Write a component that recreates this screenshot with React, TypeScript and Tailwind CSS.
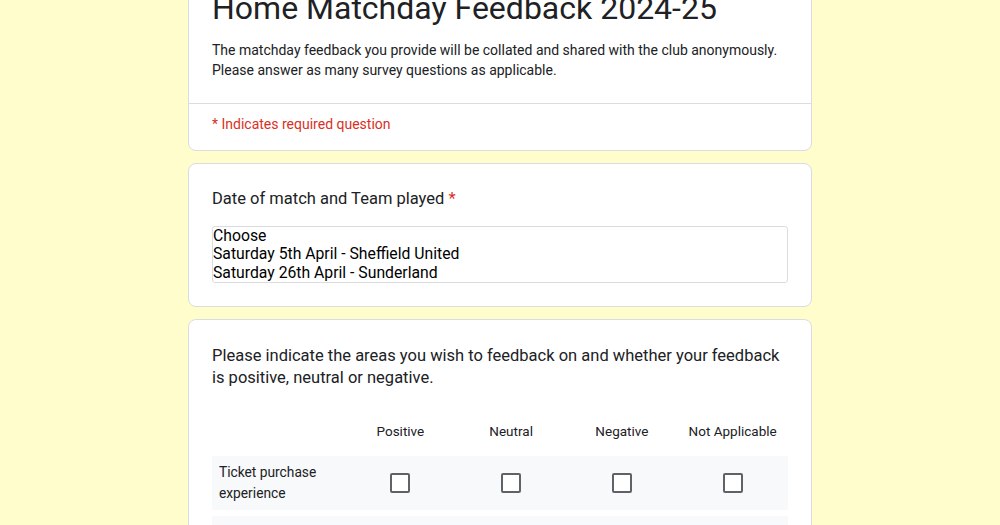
import React from 'react'

const cols = ['Positive', 'Neutral', 'Negative', 'Not Applicable']
const rows = ['Ticket purchase experience', 'Travel to the stadium']

function Box() {
  return <div className="h-5 w-5 rounded-[2px] border-2 border-[#5f6368] bg-white" />
}

export default function App() {
  return (
    <div className="min-h-[525px] w-full overflow-hidden bg-[#fffdcc] font-['Roboto',sans-serif] text-[#202124]">
      <div className="mx-auto flex w-[624px] flex-col gap-3 -mt-[37px]">
        {/* header card */}
        <div className="rounded-lg border border-[#dadce0] bg-white">
          <div className="px-[23px] pt-6 pb-[23px]">
            <h1 className="text-[32px] leading-[40px]">Home Matchday Feedback 2024-25</h1>
            <p className="mt-3 text-[14px] leading-[20px]">
              The matchday feedback you provide will be collated and shared with the club anonymously.
              <br />
              Please answer as many survey questions as applicable.
            </p>
          </div>
          <div className="border-t border-[#dadce0] px-[23px] pt-[10px] pb-4 text-[14px] leading-[20px] text-[#d93025]">
            * Indicates required question
          </div>
        </div>

        {/* date select */}
        <div className="rounded-lg border border-[#dadce0] bg-white px-[23px] pt-[23px] pb-[23px]">
          <div className="text-[16.5px] leading-[24px]">
            Date of match and Team played <span className="text-[#d93025]">*</span>
          </div>
          <div className="mt-[15px] rounded-[3px] border border-[#dadce0] text-[15.75px] leading-[18.33px] text-black">
            <div>Choose</div>
            <div>Saturday 5th April - Sheffield United</div>
            <div>Saturday 26th April - Sunderland</div>
          </div>
        </div>

        {/* grid */}
        <div className="rounded-lg border border-[#dadce0] bg-white px-[23px] pt-[25px] pb-6">
          <div className="text-[16.5px] leading-[22px]">
            Please indicate the areas you wish to feedback on and whether your feedback is positive, neutral or negative.
          </div>
          <div className="mt-8 grid grid-cols-[133px_1fr_1fr_1fr_1fr] text-[13.5px] leading-[20px]">
            <div />
            {cols.map(c => (
              <div key={c} className="text-center">{c}</div>
            ))}
          </div>
          <div className="mt-[15px] flex flex-col gap-[6px]">
            {rows.map(r => (
              <div key={r} className="grid h-[54px] grid-cols-[133px_1fr_1fr_1fr_1fr] items-center bg-[#f8f9fa]">
                <div className="pl-[7px] pr-2 text-[13.75px] leading-[21px]">{r}</div>
                {cols.map(c => (
                  <div key={c} className="flex justify-center">
                    <Box />
                  </div>
                ))}
              </div>
            ))}
          </div>
        </div>
      </div>
    </div>
  )
}
